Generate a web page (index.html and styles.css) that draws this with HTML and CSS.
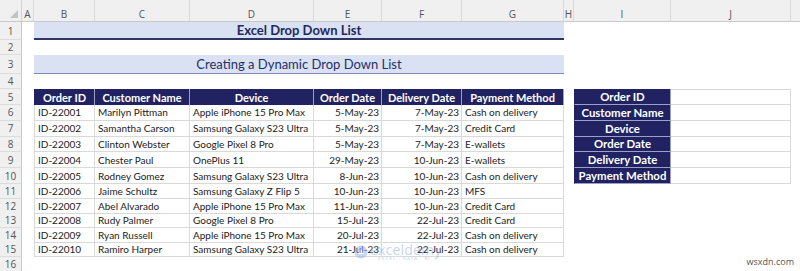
FILE: index.html
```html
<!DOCTYPE html>
<html lang="en">
<head>
<meta charset="utf-8">
<title>Excel Drop Down List</title>
<link rel="stylesheet" href="styles.css">
</head>
<body>
<div class="sheet">
  <div class="row colhead">
    <div class="corner"><span class="tri"></span></div>
    <div class="ch">A</div><div class="ch">B</div><div class="ch">C</div><div class="ch">D</div>
    <div class="ch">E</div><div class="ch">F</div><div class="ch">G</div><div class="ch">H</div>
    <div class="ch">I</div><div class="ch">J</div><div class="ch last"></div>
  </div>

  <div class="row r-title">
    <div class="rh">1</div><div></div>
    <div class="title main">Excel Drop Down List</div>
    <div></div><div></div><div></div><div></div>
  </div>
  <div class="row r-gap"><div class="rh">2</div></div>
  <div class="row r-sub">
    <div class="rh">3</div><div></div>
    <div class="title sub">Creating a Dynamic Drop Down List</div>
    <div></div><div></div><div></div><div></div>
  </div>
  <div class="row r-gap"><div class="rh">4</div></div>

  <div class="row r-head">
    <div class="rh">5</div><div></div>
    <div class="th first">Order ID</div><div class="th">Customer Name</div><div class="th">Device</div>
    <div class="th">Order Date</div><div class="th">Delivery Date</div><div class="th">Payment Method</div>
    <div></div>
    <div class="lbl top">Order ID</div><div class="val top"></div><div></div>
  </div>

  <div class="row r-a">
    <div class="rh">6</div><div></div>
    <div class="td first">ID-22001</div><div class="td">Marilyn Pittman</div><div class="td">Apple iPhone 15 Pro Max</div>
    <div class="td num">5-May-23</div><div class="td num">7-May-23</div><div class="td">Cash on delivery</div>
    <div></div>
    <div class="lbl">Customer Name</div><div class="val"></div><div></div>
  </div>
  <div class="row r-a">
    <div class="rh">7</div><div></div>
    <div class="td first">ID-22002</div><div class="td">Samantha Carson</div><div class="td">Samsung Galaxy S23 Ultra</div>
    <div class="td num">5-May-23</div><div class="td num">7-May-23</div><div class="td">Credit Card</div>
    <div></div>
    <div class="lbl">Device</div><div class="val"></div><div></div>
  </div>
  <div class="row r-a">
    <div class="rh">8</div><div></div>
    <div class="td first">ID-22003</div><div class="td">Clinton Webster</div><div class="td">Google Pixel 8 Pro</div>
    <div class="td num">5-May-23</div><div class="td num">7-May-23</div><div class="td">E-wallets</div>
    <div></div>
    <div class="lbl">Order Date</div><div class="val"></div><div></div>
  </div>
  <div class="row r-a">
    <div class="rh">9</div><div></div>
    <div class="td first">ID-22004</div><div class="td">Chester Paul</div><div class="td">OnePlus 11</div>
    <div class="td num">29-May-23</div><div class="td num">10-Jun-23</div><div class="td">E-wallets</div>
    <div></div>
    <div class="lbl">Delivery Date</div><div class="val"></div><div></div>
  </div>
  <div class="row r-a">
    <div class="rh">10</div><div></div>
    <div class="td first">ID-22005</div><div class="td">Rodney Gomez</div><div class="td">Samsung Galaxy S23 Ultra</div>
    <div class="td num">8-Jun-23</div><div class="td num">10-Jun-23</div><div class="td">Cash on delivery</div>
    <div></div>
    <div class="lbl">Payment Method</div><div class="val"></div><div></div>
  </div>
  <div class="row r-b">
    <div class="rh">11</div><div></div>
    <div class="td first">ID-22006</div><div class="td">Jaime Schultz</div><div class="td">Samsung Galaxy Z Flip 5</div>
    <div class="td num">10-Jun-23</div><div class="td num">10-Jun-23</div><div class="td">MFS</div>
  </div>
  <div class="row r-b">
    <div class="rh">12</div><div></div>
    <div class="td first">ID-22007</div><div class="td">Abel Alvarado</div><div class="td">Apple iPhone 15 Pro Max</div>
    <div class="td num">11-Jun-23</div><div class="td num">10-Jun-23</div><div class="td">Credit Card</div>
  </div>
  <div class="row r-b">
    <div class="rh">13</div><div></div>
    <div class="td first">ID-22008</div><div class="td">Rudy Palmer</div><div class="td">Google Pixel 8 Pro</div>
    <div class="td num">15-Jul-23</div><div class="td num">22-Jul-23</div><div class="td">Credit Card</div>
  </div>
  <div class="row r-b">
    <div class="rh">14</div><div></div>
    <div class="td first">ID-22009</div><div class="td">Ryan Russell</div><div class="td">Apple iPhone 15 Pro Max</div>
    <div class="td num">20-Jul-23</div><div class="td num">22-Jul-23</div><div class="td">Cash on delivery</div>
  </div>
  <div class="row r-b">
    <div class="rh">15</div><div></div>
    <div class="td first">ID-22010</div><div class="td">Ramiro Harper</div><div class="td">Samsung Galaxy S23 Ultra</div>
    <div class="td num">21-Jul-23</div><div class="td num">22-Jul-23</div><div class="td">Cash on delivery</div>
  </div>
  <div class="row r-last"><div class="rh">16</div></div>

  <div class="watermark">
    <svg class="wm-logo" width="14" height="14" viewBox="0 0 14 14"><circle cx="7" cy="7" r="6.5" fill="#8fb0e6"/><path d="M4 9 L7 4 L10 9 Z" fill="#ffffff"/></svg>
    <div class="wm-text"><span class="wm-name">exceldemy</span><span class="wm-tag">EXCEL · DATA · BI</span></div>
  </div>
  <div class="credit">wsxdn.com</div>
</div>
</body>
</html>
```
FILE: styles.css
```css
* { box-sizing: border-box; }
html, body { margin: 0; padding: 0; background: #ffffff; }
body { font-family: Lato, "Open Sans", sans-serif; color: #222222; }

.sheet {
  position: relative;
  width: 800px;
  height: 271px;
  overflow: hidden;
  background: #ffffff;
}

.row {
  display: grid;
  grid-template-columns: 22px 12px 61px 95px 124px 68px 80px 102px 10px 97px 120px 1fr;
  font-size: 10px;
}

.colhead { height: 22px; background: #f0f0f0; border-bottom: 1px solid #c9c9c9; }
.corner { position: relative; border-right: 1px solid #d4d4d4; }
.tri {
  position: absolute; right: 3px; bottom: 3px;
  width: 0; height: 0;
  border-left: 8px solid transparent;
  border-bottom: 8px solid #c4c4c4;
}
.ch {
  border-right: 1px solid #d8d8d8;
  color: #555555;
  font-family: "Open Sans", Lato, sans-serif;
  font-size: 10px;
  text-align: center;
  padding-top: 7px;
}
.ch.last { border-right: 0; }

.rh {
  background: #f0f0f0;
  border-right: 1px solid #c9c9c9;
  border-bottom: 1px solid #dcdcdc;
  color: #555555;
  font-family: "Open Sans", Lato, sans-serif;
  font-size: 10px;
  display: flex; align-items: center; justify-content: center;
}

.r-title { height: 18px; }
.r-gap { height: 15px; }
.r-sub { height: 19px; }
.r-head { height: 16px; }
.r-a { height: 15.8px; }
.r-b { height: 14.6px; }
.r-last { height: 14px; }

.title {
  grid-column: 3 / 9;
  background: #d9e1f2;
  color: #1f2a5c;
  display: flex; align-items: center; justify-content: center;
}
.title.main { font-weight: 700; font-size: 13px; border-bottom: 2px solid #2b3566; }
.title.sub { font-size: 13px; color: #24306a; border-bottom: 1px solid #7d8cb5; }

.th, .lbl {
  background: #212262;
  color: #ffffff;
  font-weight: 700;
  font-size: 11px;
  display: flex; align-items: center; justify-content: center;
  border-right: 1px solid #9da0c4;
  white-space: nowrap;
}
.th.first { border-left: 1px solid #212262; }
.lbl { border-bottom: 1px solid #9da0c4; border-left: 1px solid #212262; font-size: 11.4px; }
.val { border-right: 1px solid #d9d9d9; border-bottom: 1px solid #d9d9d9; }
.top.val { border-top: 1px solid #d9d9d9; }

.td {
  border-right: 1px solid #d9d9d9;
  border-bottom: 1px solid #d9d9d9;
  padding: 0 3px;
  display: flex; align-items: center;
  white-space: nowrap;
  overflow: hidden;
}
.td.first { border-left: 1px solid #d9d9d9; }
.td.num { justify-content: flex-end; padding-right: 2px; }

.watermark {
  position: absolute;
  left: 354px; top: 243px;
  display: flex; align-items: center; gap: 2px;
  opacity: 0.5;
  pointer-events: none;
}
.wm-text { display: flex; flex-direction: column; line-height: 1; }
.wm-name { font-family: "Open Sans", sans-serif; font-size: 14px; color: #8fb0e6; letter-spacing: 0.2px; }
.wm-tag { font-size: 4.5px; color: #9aa8c0; letter-spacing: 1px; margin-left: 8px; }

.credit {
  position: absolute;
  right: 6px; bottom: 3px;
  font-family: "Open Sans", sans-serif;
  font-size: 9px;
  color: #555555;
}
```
